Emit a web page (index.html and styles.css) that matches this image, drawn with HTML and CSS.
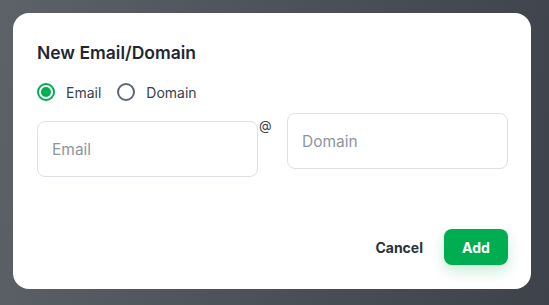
FILE: index.html
```html
<!DOCTYPE html>
<html lang="en">
<head>
    <meta charset="UTF-8">
    <meta name="viewport" content="width=device-width, initial-scale=1.0">
    <title>New Email/Domain</title>
    <link rel="stylesheet" href="styles.css">
</head>
<body>

    <div class="backdrop">
        <div class="modal">
            <h2>New Email/Domain</h2>

            <div class="radio-row">
                <label class="radio">
                    <span class="dot checked"></span>
                    Email
                </label>
                <label class="radio">
                    <span class="dot"></span>
                    Domain
                </label>
            </div>

            <div class="field-row">
                <input type="text" class="field email-field" placeholder="Email">
                <span class="at">@</span>
                <input type="text" class="field" placeholder="Domain">
            </div>

            <div class="actions">
                <button type="button" class="btn-cancel">Cancel</button>
                <button type="button" class="btn-add">Add</button>
            </div>
        </div>
    </div>

</body>
</html>
```

FILE: styles.css
```css
html, body {
    height: 100%;
}

body {
    font-family: Inter, "Noto Sans", sans-serif;
    background: linear-gradient(100deg, #5d6168 0%, #4b4f57 55%, #3e424a 100%);
    margin: 0;
    overflow: hidden;
}

.backdrop {
    padding: 13px 18px 16px 13px;
    height: 100%;
    box-sizing: border-box;
}

.modal {
    background-color: #fff;
    border-radius: 16px;
    height: 100%;
    box-sizing: border-box;
    padding: 29px 23px 24px 24px;
    display: flex;
    flex-direction: column;
}

h2 {
    margin: 0;
    font-size: 17.5px;
    font-weight: 600;
    color: #1f2733;
}

.radio-row {
    display: flex;
    gap: 16px;
    margin-top: 20px;
}

.radio {
    display: flex;
    align-items: center;
    gap: 11px;
    font-size: 14px;
    color: #3a4250;
}

.dot {
    width: 18px;
    height: 18px;
    border: 2px solid #5f6775;
    border-radius: 50%;
    box-sizing: border-box;
    display: flex;
    align-items: center;
    justify-content: center;
}

.dot.checked {
    border-color: #00ad50;
}

.dot.checked::after {
    content: "";
    width: 10px;
    height: 10px;
    border-radius: 50%;
    background-color: #00ad50;
}

.field-row {
    display: flex;
    align-items: flex-start;
    margin-top: 12px;
}

.field {
    width: 221px;
    height: 56px;
    padding: 0 14px;
    border: 1px solid #dde0e5;
    border-radius: 8px;
    box-sizing: border-box;
    outline: none;
    font-family: inherit;
    font-size: 15.5px;
    color: #1f2733;
}

.field::placeholder {
    color: #8d95a1;
}

.email-field {
    margin-top: 8px;
}

.at {
    width: 29px;
    font-size: 13px;
    color: #3a4250;
    margin-top: 4px;
    padding-left: 1px;
}

.actions {
    margin-top: auto;
    display: flex;
    justify-content: flex-end;
    align-items: center;
    gap: 21px;
}

.btn-cancel {
    background: none;
    border: none;
    padding: 0;
    font-family: inherit;
    font-size: 14px;
    font-weight: 700;
    color: #2b313b;
    cursor: pointer;
}

.btn-add {
    width: 64px;
    height: 36px;
    background-color: #00ad50;
    color: #fff;
    border: none;
    border-radius: 8px;
    font-family: inherit;
    font-size: 14px;
    font-weight: 700;
    box-shadow: 0 6px 14px rgba(0, 173, 80, 0.22);
    cursor: pointer;
}
```
